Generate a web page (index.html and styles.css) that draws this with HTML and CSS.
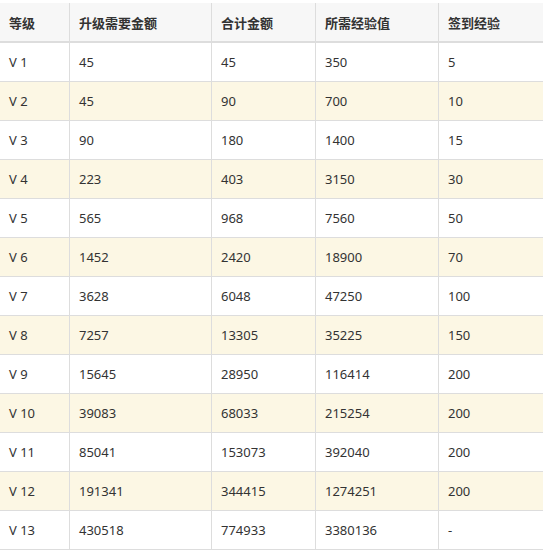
FILE: index.html
```html
<!DOCTYPE html>
<html lang="zh-CN">
<head>
<meta charset="utf-8">
<title>等级</title>
<link rel="stylesheet" href="styles.css">
</head>
<body>
<table class="vip">
  <colgroup>
    <col class="c1"><col class="c2"><col class="c3"><col class="c4"><col class="c5">
  </colgroup>
  <thead>
    <tr><th>等级</th><th>升级需要金额</th><th>合计金额</th><th>所需经验值</th><th>签到经验</th></tr>
  </thead>
  <tbody>
    <tr><td>V 1</td><td>45</td><td>45</td><td>350</td><td>5</td></tr>
    <tr><td>V 2</td><td>45</td><td>90</td><td>700</td><td>10</td></tr>
    <tr><td>V 3</td><td>90</td><td>180</td><td>1400</td><td>15</td></tr>
    <tr><td>V 4</td><td>223</td><td>403</td><td>3150</td><td>30</td></tr>
    <tr><td>V 5</td><td>565</td><td>968</td><td>7560</td><td>50</td></tr>
    <tr><td>V 6</td><td>1452</td><td>2420</td><td>18900</td><td>70</td></tr>
    <tr><td>V 7</td><td>3628</td><td>6048</td><td>47250</td><td>100</td></tr>
    <tr><td>V 8</td><td>7257</td><td>13305</td><td>35225</td><td>150</td></tr>
    <tr><td>V 9</td><td>15645</td><td>28950</td><td>116414</td><td>200</td></tr>
    <tr><td>V 10</td><td>39083</td><td>68033</td><td>215254</td><td>200</td></tr>
    <tr><td>V 11</td><td>85041</td><td>153073</td><td>392040</td><td>200</td></tr>
    <tr><td>V 12</td><td>191341</td><td>344415</td><td>1274251</td><td>200</td></tr>
    <tr><td>V 13</td><td>430518</td><td>774933</td><td>3380136</td><td>-</td></tr>
  </tbody>
</table>
</body>
</html>
```
FILE: styles.css
```css
html, body {
  margin: 0;
  padding: 0;
  background: #ffffff;
}
body {
  padding-top: 3px;
  font-family: "Noto Sans", "Noto Sans CJK SC", sans-serif;
  font-size: 13px;
  color: #333333;
}
.vip {
  width: 543px;
  table-layout: fixed;
  border-collapse: separate;
  border-spacing: 0;
}
.c1 { width: 70px; }
.c2 { width: 142px; }
.c3 { width: 104px; }
.c4 { width: 123px; }
.c5 { width: 104px; }
.vip th,
.vip td {
  box-sizing: border-box;
  text-align: left;
  padding: 0 0 0 9px;
  border-right: 1px solid #dddddd;
  border-bottom: 1px solid #dddddd;
  white-space: nowrap;
  font-weight: normal;
}
.vip th:last-child,
.vip td:last-child {
  border-right: none;
}
.vip th {
  height: 40px;
  background: #f7f7f7;
  font-weight: bold;
  border-bottom: 2px solid #dddddd;
  color: #333333;
}
.vip td {
  height: 39px;
}
.vip tbody tr:nth-child(even) td {
  background: #fcf7e4;
}
```
